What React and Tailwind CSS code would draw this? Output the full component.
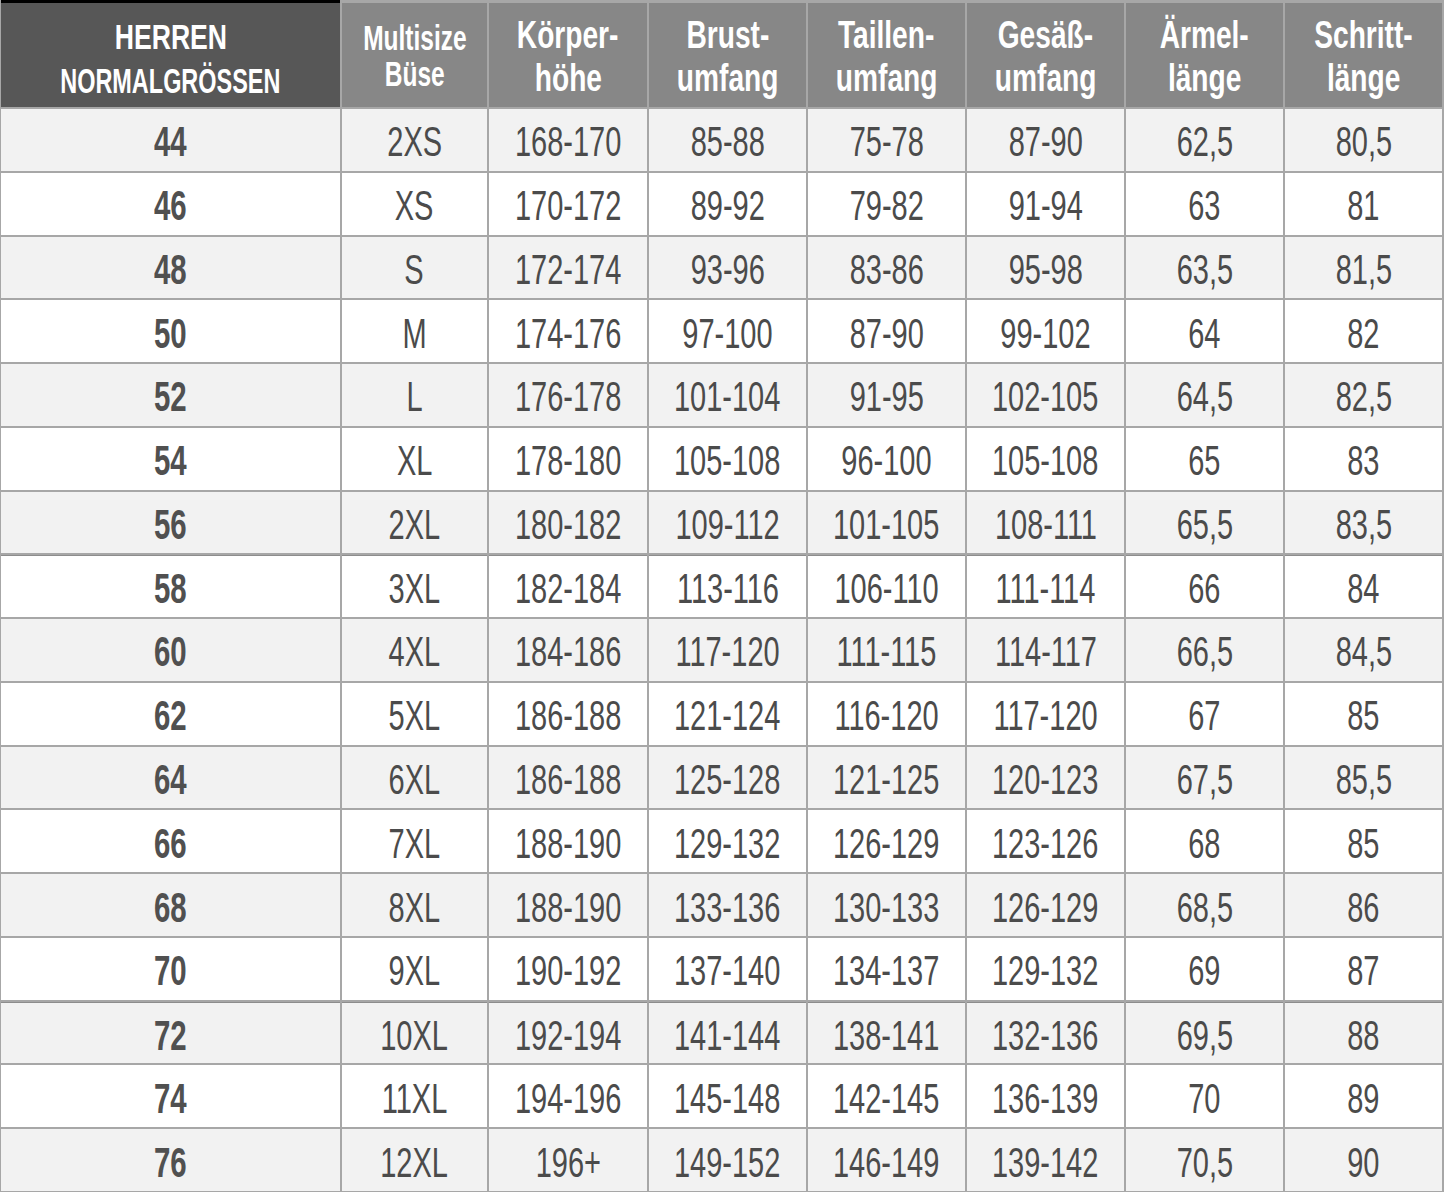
const headers = [
    ['Körper-', 'höhe'],
    ['Brust-', 'umfang'],
    ['Taillen-', 'umfang'],
    ['Gesäß-', 'umfang'],
    ['Ärmel-', 'länge'],
    ['Schritt-', 'länge'],
];

const rows = [
    ['44', '2XS', '168-170', '85-88', '75-78', '87-90', '62,5', '80,5'],
    ['46', 'XS', '170-172', '89-92', '79-82', '91-94', '63', '81'],
    ['48', 'S', '172-174', '93-96', '83-86', '95-98', '63,5', '81,5'],
    ['50', 'M', '174-176', '97-100', '87-90', '99-102', '64', '82'],
    ['52', 'L', '176-178', '101-104', '91-95', '102-105', '64,5', '82,5'],
    ['54', 'XL', '178-180', '105-108', '96-100', '105-108', '65', '83'],
    ['56', '2XL', '180-182', '109-112', '101-105', '108-111', '65,5', '83,5'],
    ['58', '3XL', '182-184', '113-116', '106-110', '111-114', '66', '84'],
    ['60', '4XL', '184-186', '117-120', '111-115', '114-117', '66,5', '84,5'],
    ['62', '5XL', '186-188', '121-124', '116-120', '117-120', '67', '85'],
    ['64', '6XL', '186-188', '125-128', '121-125', '120-123', '67,5', '85,5'],
    ['66', '7XL', '188-190', '129-132', '126-129', '123-126', '68', '85'],
    ['68', '8XL', '188-190', '133-136', '130-133', '126-129', '68,5', '86'],
    ['70', '9XL', '190-192', '137-140', '134-137', '129-132', '69', '87'],
    ['72', '10XL', '192-194', '141-144', '138-141', '132-136', '69,5', '88'],
    ['74', '11XL', '194-196', '145-148', '142-145', '136-139', '70', '89'],
    ['76', '12XL', '196+', '149-152', '146-149', '139-142', '70,5', '90'],
];

// rows that get the darker separator above them
const strongTop = ['58', '72'];

export default function App() {
    return (
        <div className="w-[1445px] h-[1193px] bg-white font-['Liberation_Sans',Arial,sans-serif]">
            <div className="grid grid-cols-[339px_145px_158px_157px_157px_157px_157px_157px] grid-rows-[107px_repeat(17,minmax(0,1fr))] gap-[2px] bg-[#a7a7a7] p-[1px] pt-0 h-[1192px] w-[1444px]">

                {/* HEADER */}
                <div className="flex flex-col items-center justify-center bg-[#575757] border-t-[3px] border-black text-white font-bold text-[35px] leading-[44px] pt-[8px]">
                    <span className="inline-block scale-x-[0.76]">HERREN</span>
                    <span className="inline-block scale-x-[0.67] whitespace-nowrap">NORMALGRÖSSEN</span>
                </div>
                <div className="flex flex-col items-center justify-center bg-[#878787] mt-[3px] text-white font-bold text-[35px] leading-[36px] pt-[1px]">
                    <span className="inline-block scale-x-[0.7]">Multisize</span>
                    <span className="inline-block scale-x-[0.7]">Büse</span>
                </div>
                {headers.map(([a, b]) => (
                    <div key={a} className="flex flex-col items-center justify-center bg-[#878787] mt-[3px] text-white font-bold text-[38px] leading-[43px] pt-[4px]">
                        <span className="inline-block scale-x-[0.74] whitespace-nowrap">{a}</span>
                        <span className="inline-block scale-x-[0.74] whitespace-nowrap">{b}</span>
                    </div>
                ))}

                {/* ROWS */}
                {rows.map((row, i) =>
                    row.map((cell, j) => (
                        <div
                            key={`${i}-${j}`}
                            className={`flex items-center justify-center pt-[5px] text-[42px] leading-none text-[#4b4b4b] ${i % 2 === 0 ? 'bg-[#f2f2f2]' : 'bg-white'} ${strongTop.includes(row[0]) ? 'border-t border-[#8d8d8d]' : ''} ${j === 0 ? 'font-bold' : ''}`}
                        >
                            <span className={`inline-block whitespace-nowrap ${j === 0 ? 'scale-x-[0.7] text-[#505050]' : 'scale-x-[0.69]'}`}>{cell}</span>
                        </div>
                    ))
                )}
            </div>
        </div>
    )
}
